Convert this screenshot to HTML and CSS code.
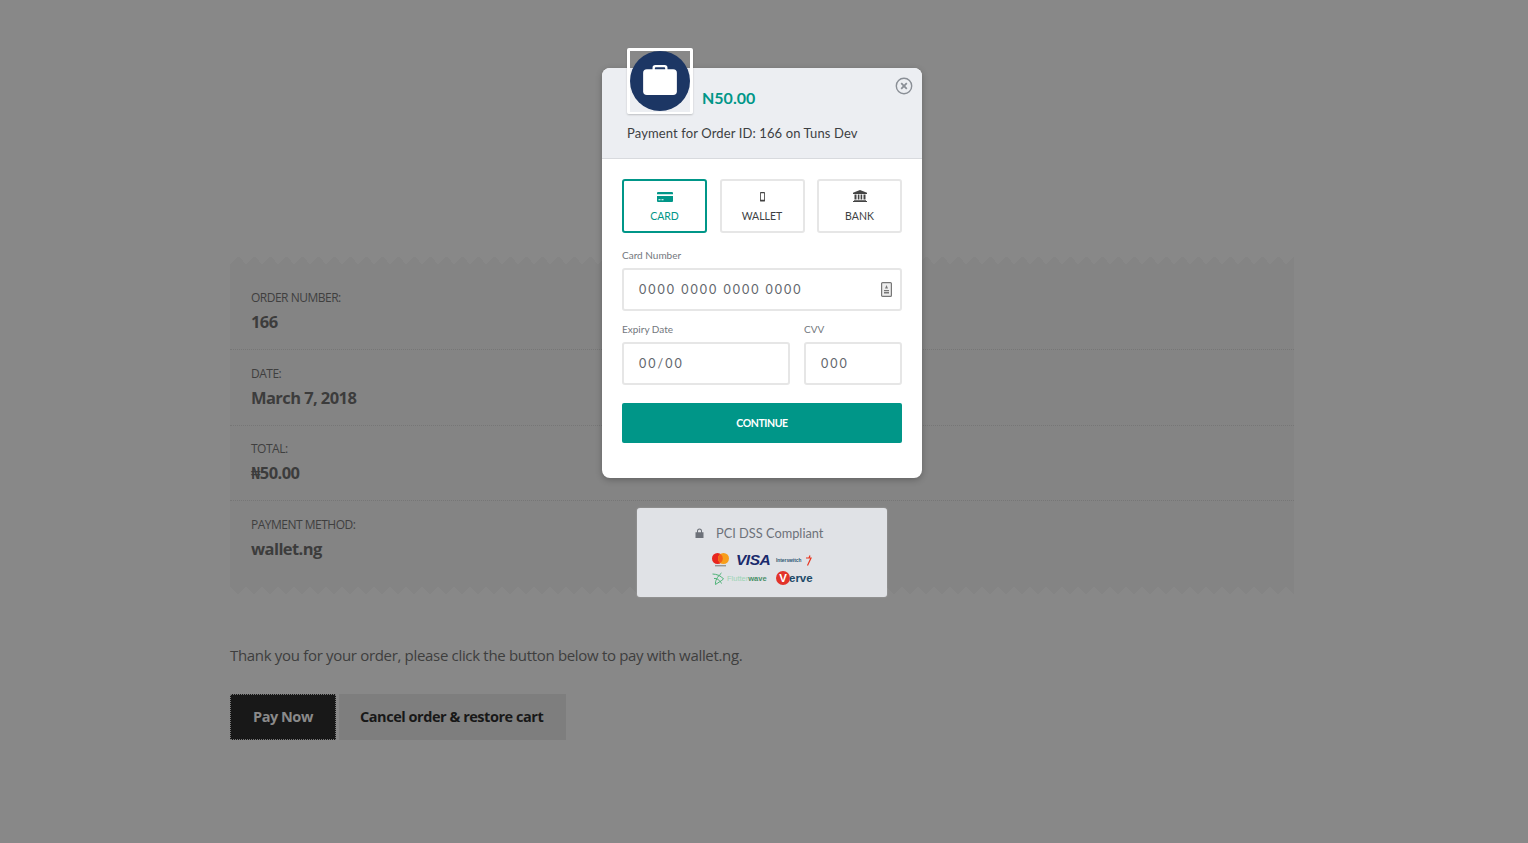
FILE: index.html
```html
<!DOCTYPE html>
<html>
<head>
	<title>Pay for order</title>
	<link rel="stylesheet" href="styles.css">
</head>
<body>
<div class="page">
	<ul class="order">
		<li class="row"><span class="label">ORDER NUMBER:</span><strong class="value">166</strong></li>
		<li class="row"><span class="label">DATE:</span><strong class="value">March 7, 2018</strong></li>
		<li class="row"><span class="label">TOTAL:</span><strong class="value">₦50.00</strong></li>
		<li class="row"><span class="label">PAYMENT METHOD:</span><strong class="value">wallet.ng</strong></li>
	</ul>
	<p class="thanks">Thank you for your order, please click the button below to pay with wallet.ng.</p>
	<div class="actions">
		<a class="btn pay">Pay Now</a>
		<a class="btn cancel">Cancel order &amp; restore cart</a>
	</div>
</div>

<div class="overlay">
	<section class="modal">
		<header class="head">
			<div class="logo">
				<div class="circle">
					<svg width="34" height="30" viewBox="0 0 36 32">
						<path d="M10 6V3a3 3 0 0 1 3-3h10a3 3 0 0 1 3 3v3h-2.500V3.500a1 1 0 0 0-1-1h-9a1 1 0 0 0-1 1V6z" fill="#fff"/>
						<rect x="0" y="4.500" width="36" height="27.500" rx="4" fill="#fff"/>
					</svg>
				</div>
			</div>
			<div class="amount">N50.00</div>
			<svg class="close" width="18" height="18" viewBox="0 0 18 18" fill="none" stroke="#8a8f96">
				<circle cx="9" cy="9" r="7.700" stroke-width="1.400"/>
				<path d="M6.200 6.200l5.600 5.600M11.800 6.200l-5.600 5.600" stroke-width="1.800"/>
			</svg>
			<p class="desc">Payment for Order ID: 166 on Tuns Dev</p>
		</header>
		<div class="body">
			<div class="tabs">
				<div class="tab active">
					<svg width="16" height="10" viewBox="0 0 16 11" preserveAspectRatio="none">
						<path d="M1 0h14a1 1 0 0 1 1 1v1.500H0V1a1 1 0 0 1 1-1zM0 4.500h16V10a1 1 0 0 1-1 1H1a1 1 0 0 1-1-1zM1.500 8v1h2V8zM4.500 8v1h2V8z" fill="#009688" fill-rule="evenodd"/>
					</svg>
					<span>CARD</span>
				</div>
				<div class="tab">
					<svg width="5" height="10" viewBox="0 0 6 11" preserveAspectRatio="none">
						<path d="M1 0h4a1 1 0 0 1 1 1v8.500a1 1 0 0 1-1 1H1a1 1 0 0 1-1-1V1a1 1 0 0 1 1-1zM1 1.500v7h4v-7z" fill="#444" fill-rule="evenodd"/>
					</svg>
					<span>WALLET</span>
				</div>
				<div class="tab">
					<svg width="14" height="12" viewBox="0 0 14 12">
						<path d="M7 0l7 2.800V4H0V2.800zM1.500 4.500h2v5h-2zM4.800 4.500h1.600v5H4.800zM7.600 4.500h1.600v5H7.600zM10.500 4.500h2v5h-2zM1 10h12v.8H1zM0 11.100h14V12H0z" fill="#444"/>
					</svg>
					<span>BANK</span>
				</div>
			</div>
			<label class="field-label">Card Number</label>
			<div class="input">
				<span>0000 0000 0000 0000</span>
				<svg class="input-icon" width="11" height="15" viewBox="0 0 11 15">
					<rect x="0.600" y="0.600" width="9.800" height="13.800" rx="1" fill="#eee" stroke="#777" stroke-width="1.200"/>
					<path d="M5.500 3l1.500 3.500H4zM3 8h5v1.200H3zM3 10h5v1.600H3z" fill="#777"/>
				</svg>
			</div>
			<div class="split">
				<div>
					<label class="field-label">Expiry Date</label>
					<div class="input"><span>00/00</span></div>
				</div>
				<div>
					<label class="field-label">CVV</label>
					<div class="input"><span>000</span></div>
				</div>
			</div>
			<button class="continue" type="button">CONTINUE</button>
		</div>
	</section>

	<div class="secure">
		<div class="pci">
			<svg width="9" height="10" viewBox="0 0 9 10">
				<path d="M2 4.500V3a2.500 2.500 0 0 1 5 0v1.500H6V3a1.500 1.500 0 0 0-3 0v1.500z M0.500 4.200h8V10h-8z" fill="#6d7179"/>
			</svg>
			<span>PCI DSS Compliant</span>
		</div>
		<div class="brands">
			<svg class="mc" width="17" height="14" viewBox="0 0 17 14">
				<circle cx="5.500" cy="5.500" r="5.500" fill="#e8251f"/>
				<circle cx="11.500" cy="5.500" r="5.500" fill="#f79e1b"/>
				<path d="M8.500 1a5.500 5.500 0 0 1 0 9a5.500 5.500 0 0 1 0-9z" fill="#f4601a"/>
				<rect x="3" y="12.300" width="11" height="1" fill="#777"/>
			</svg>
			<span class="visa">VISA</span>
			<span class="interswitch">Interswitch</span>
			<svg width="7" height="11" viewBox="0 0 7 11" fill="none" stroke="#e8351f" stroke-width="1.200">
				<path d="M1 3h5L2.500 10.500M5 0.500L4 3"/>
			</svg>
		</div>
		<div class="brands">
			<svg width="13" height="13" viewBox="0 0 13 13" fill="none" stroke="#4cb276" stroke-width="1">
				<path d="M0.500 2c4 0 9 2 11 5-3 2.500-6 4-8 5.500C3 9 5 5 9.500 1M2 6.500c3-.5 6 2 7.500 5"/>
			</svg>
			<span class="flutter">Flutter<b>wave</b></span>
			<span class="verve"><i>V</i>erve</span>
		</div>
	</div>
</div>
</body>
</html>
```

FILE: styles.css
```css
* {
	box-sizing: border-box;
}
html, body {
	height: 100%;
}
body {
	margin: 0;
	background: #888;
	font-family: "Open Sans", "Noto Sans", sans-serif;
	color: #3c3c3c;
	overflow: hidden;
}
.page {
	width: 1064px;
	margin-left: 230px;
	padding-top: 256px;
}
.order {
	position: relative;
	list-style: none;
	margin: 0;
	padding: 0;
	height: 338px;
	background: linear-gradient(#848484, #848484) 0 8px / 100% 322px no-repeat;
}
.order:before, .order:after {
	content: "";
	position: absolute;
	left: 0;
	right: 0;
	height: 8px;
	background-size: 16px 8px;
	background-repeat: repeat-x;
}
.order:before {
	top: 0;
	background-image: conic-gradient(from 135deg at 50% 0, #848484 90deg, #888 90deg);
}
.order:after {
	bottom: 0;
	background-image: conic-gradient(from -45deg at 50% 100%, #848484 90deg, #888 90deg);
}
.row {
	display: flex;
	flex-direction: column;
	height: 75.500px;
	padding: 15px 21px 0;
	border-bottom: 1px dotted #767676;
}
.row:first-child {
	height: 94px;
	padding-top: 34px;
}
.row:nth-child(2) {
	padding-top: 16px;
}
.row:last-child {
	padding-top: 16px;
	border-bottom: 0;
}
.label {
	font-size: 12px;
	line-height: 16px;
	color: #3f3f3f;
	letter-spacing: -0.500px;
}
.value {
	font-size: 16.500px;
	line-height: 24px;
	margin-top: 4px;
	color: #3c3c3c;
	letter-spacing: -0.580px;
}
.thanks {
	margin: 50px 0 0;
	font-size: 15px;
	line-height: 22px;
	color: #3e3e3e;
	letter-spacing: -0.320px;
}
.actions {
	display: flex;
	gap: 3px;
	margin-top: 28px;
}
.btn {
	display: block;
	height: 46px;
	line-height: 45px;
	padding: 0 21px;
	font-size: 14.500px;
	font-weight: 700;
	letter-spacing: -0.460px;
	white-space: nowrap;
}
.pay {
	width: 106px;
	padding-left: 23px;
	background: #181818;
	color: #8a8a8a;
	outline: 1px dotted #777;
	outline-offset: -1px;
}
.cancel {
	width: 227px;
	background: #7e7e7e;
	color: #181818;
}

/* payment popup */
.overlay {
	position: absolute;
	top: 48px;
	left: 602px;
	width: 320px;
	font-family: Lato, "Noto Sans", sans-serif;
}
.modal {
	margin-top: 20px;
	height: 410px;
	background: #fff;
	border-radius: 8px;
	box-shadow: 0 2px 6px rgba(0,0,0,0.25);
}
.head {
	position: relative;
	height: 91px;
	background: #eceef2;
	border-bottom: 1px solid #d8dade;
	border-radius: 8px 8px 0 0;
	padding: 20px 25px 0 100px;
}
.logo {
	position: absolute;
	top: -20px;
	left: 25px;
	width: 66px;
	height: 66px;
	padding: 3px;
	border: 3px solid #fff;
	border-bottom-width: 2px;
	border-radius: 2px;
	box-shadow: 0 1px 2px rgba(0,0,0,0.2);
}
.circle {
	display: flex;
	align-items: center;
	justify-content: center;
	width: 60px;
	height: 60px;
	margin: -3px 0 0 -3px;
	padding-bottom: 2px;
	border-radius: 50%;
	background: #1c3664;
}
.amount {
	font-size: 16px;
	line-height: 20px;
	font-weight: 700;
	color: #009688;
}
.close {
	position: absolute;
	top: 9px;
	right: 9px;
}
.desc {
	position: absolute;
	left: 25px;
	top: 56px;
	margin: 0;
	font-size: 13px;
	line-height: 18px;
	color: #3d3f43;
	letter-spacing: 0.120px;
}
.body {
	padding: 20px;
}
.tabs {
	display: flex;
	justify-content: space-between;
}
.tab {
	display: flex;
	flex-direction: column;
	align-items: center;
	justify-content: flex-end;
	width: 85px;
	height: 54px;
	padding-bottom: 8px;
	gap: 8px;
	border: 2px solid #e6e6e6;
	border-radius: 3px;
	font-size: 10.500px;
	line-height: 13px;
	color: #3d3f43;
}
.tab.active {
	border-color: #009688;
	color: #009688;
}
.field-label {
	display: block;
	margin: 16px 0 6px;
	font-size: 10px;
	line-height: 13px;
	color: #73777d;
}
.input {
	display: flex;
	align-items: center;
	justify-content: space-between;
	height: 43px;
	padding: 0 8px 0 15px;
	border: 2px solid #e6e6e6;
	border-radius: 3px;
	font-size: 12.500px;
	letter-spacing: 2px;
	color: #62666c;
}
.split {
	display: grid;
	grid-template-columns: 168px 98px;
	gap: 14px;
	margin-top: 12px;
}
.split .field-label {
	margin-top: 0;
}
.continue {
	display: block;
	width: 100%;
	height: 40px;
	margin-top: 18px;
	border: 0;
	border-radius: 2px;
	background: #009688;
	color: #fff;
	font-family: Lato, sans-serif;
	font-size: 10.500px;
	font-weight: 700;
	letter-spacing: -0.400px;
}
.secure {
	width: 250px;
	height: 89px;
	margin: 30px 0 0 35px;
	padding: 17px 0 0 58px;
	background: #e0e2e6;
	border-radius: 3px;
	box-shadow: 0 0 2px rgba(255,255,255,0.3);
}
.pci {
	display: flex;
	align-items: center;
	gap: 12px;
	font-size: 12.800px;
	line-height: 16px;
	color: #6d7179;
	margin-bottom: 10px;
}
.brands {
	display: flex;
	align-items: center;
	height: 18px;
	margin-left: 17px;
	font-family: "Liberation Sans", sans-serif;
}
.mc {
	margin-right: 7px;
}
.visa {
	width: 40px;
	font-size: 15.500px;
	font-weight: 700;
	font-style: italic;
	color: #1a2a6c;
	letter-spacing: -0.500px;
}
.interswitch {
	width: 29px;
	font-size: 4.800px;
	font-weight: 700;
	color: #2c5570;
}
.flutter {
	width: 49px;
	margin-left: 2px;
	font-size: 7.500px;
	color: #9cd4b4;
}
.flutter b {
	color: #4a8f66;
}
.verve {
	font-size: 11.500px;
	font-weight: 700;
	color: #1d4a68;
}
.verve i {
	display: inline-block;
	width: 14px;
	height: 14px;
	border-radius: 50%;
	background: #e2332a;
	color: #fff;
	font-style: normal;
	text-align: center;
	line-height: 14px;
	margin-right: -1px;
}
```
